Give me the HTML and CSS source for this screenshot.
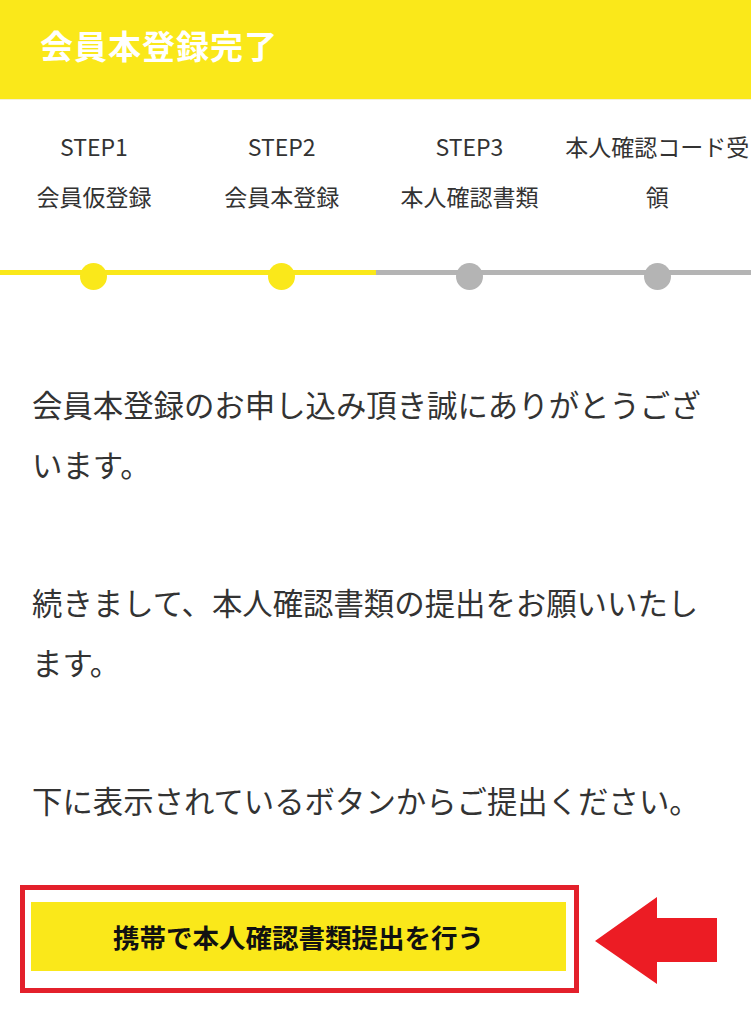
FILE: index.html
```html
<!DOCTYPE html>
<html lang="ja">
<head>
  <meta charset="UTF-8" />
  <meta name="viewport" content="width=device-width, initial-scale=1.0"/>
  <title>会員本登録完了</title>
  <link rel="stylesheet" href="styles.css">
</head>
<body>
  <header>
    <h1>会員本登録完了</h1>
  </header>

  <ol class="steps">
    <li class="step done">
      <div class="step-label">STEP1<br>会員仮登録</div>
      <div class="track"><span class="dot"></span></div>
    </li>
    <li class="step done">
      <div class="step-label">STEP2<br>会員本登録</div>
      <div class="track"><span class="dot"></span></div>
    </li>
    <li class="step">
      <div class="step-label">STEP3<br>本人確認書類</div>
      <div class="track"><span class="dot"></span></div>
    </li>
    <li class="step">
      <div class="step-label">本人確認コード受領</div>
      <div class="track"><span class="dot"></span></div>
    </li>
  </ol>

  <main class="message">
    <p>会員本登録のお申し込み頂き誠にありがとうございます。</p>
    <p>続きまして、本人確認書類の提出をお願いいたします。</p>
    <p>下に表示されているボタンからご提出ください。</p>
  </main>

  <div class="action">
    <div class="highlight">
      <button class="submit">携帯で本人確認書類提出を行う</button>
    </div>
    <svg class="arrow" width="124" height="88" viewBox="0 0 124 88">
      <polygon points="0,44 62,0 62,21 122,21 122,65 62,65 62,87" fill="#ec1c24"/>
    </svg>
  </div>
</body>
</html>
```

FILE: styles.css
```css
body {
  margin: 0;
  font-family: "Noto Sans CJK JP", "Noto Sans", sans-serif;
  background: #fff;
  color: #333;
}

header {
  background-color: #fae81a;
  height: 100px;
  display: flex;
  align-items: center;
  padding: 0 0 10px 40px;
  box-sizing: border-box;
  border-bottom: 1px solid #f3f0d8;
}

header h1 {
  margin: 0;
  color: #fff;
  font-size: 33px;
  font-weight: bold;
  letter-spacing: 1px;
}

.steps {
  list-style: none;
  margin: 0;
  padding: 21px 0 0;
  display: grid;
  grid-template-columns: repeat(4, 1fr);
}

.step-label {
  height: 100px;
  font-size: 23px;
  line-height: 50px;
  text-align: center;
  color: #333;
}

.track {
  margin-top: 42px;
  height: 27px;
  display: flex;
  justify-content: center;
  background: linear-gradient(#b4b4b4, #b4b4b4) 0 7px / 100% 5px no-repeat;
}

.dot {
  width: 27px;
  height: 27px;
  border-radius: 50%;
  background: #b4b4b4;
}

.step.done .track {
  background-image: linear-gradient(#fae81a, #fae81a);
}

.step.done .dot {
  background: #fae81a;
}

.message {
  padding: 84px 32px 0;
}

.message p {
  margin: 0 0 78px;
  font-size: 30.4px;
  line-height: 60px;
  color: #333;
}

.message p:last-child {
  margin-bottom: 55px;
}

.action {
  display: flex;
  align-items: center;
  padding: 0 0 30px 20px;
}

.highlight {
  border: 5px solid #e3202b;
  padding: 12px 8px 17px 6px;
  width: 535px;
}

.submit {
  display: block;
  width: 100%;
  height: 69px;
  border: none;
  background: #fae81a;
  color: #111;
  font-family: inherit;
  font-size: 26.5px;
  font-weight: bold;
  cursor: pointer;
}

.arrow {
  margin-left: 16px;
  margin-top: 4px;
}
```
